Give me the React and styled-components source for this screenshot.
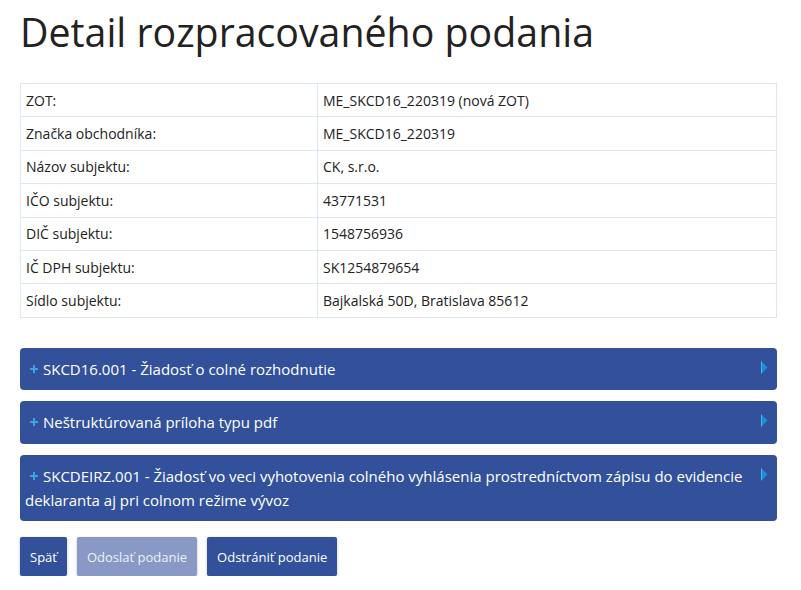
import React from 'react'
import styled, { createGlobalStyle } from 'styled-components'

const GlobalStyle = createGlobalStyle`
  body {
    margin: 0;
    background: #fff;
    font-family: "Open Sans", "Noto Sans", sans-serif;
    color: #222;
  }
`

const Page = styled.div`
  padding: 0 24px 0 20px;
`

const Title = styled.h1`
  margin: 0;
  padding-top: 6px;
  font-size: 39.3px;
  font-weight: 400;
  line-height: 52px;
  color: #222;
`

const Table = styled.table`
  width: 100%;
  margin-top: 25px;
  border-collapse: collapse;
  table-layout: fixed;
  font-size: 14px;
`

const Cell = styled.td`
  border: 1px solid #dde6f6;
  height: 32.4px;
  padding: 0 5px;
  width: ${p => (p.$label ? '286px' : 'auto')};
  vertical-align: middle;
`

const Panels = styled.div`
  margin-top: 30px;
  display: flex;
  flex-direction: column;
  gap: 11px;
`

const Panel = styled.div`
  display: flex;
  align-items: flex-start;
  gap: 8px;
  background: #32519a;
  border-radius: 4px;
  color: #fff;
  font-size: 15px;
  line-height: 24px;
  padding: 9px 9px 9.5px 5px;
`

const PanelTitle = styled.div`
  flex: 1;
`

const Plus = styled.span`
  display: inline-block;
  margin: 0 5px 0 5px;
  vertical-align: 2px;
  line-height: 0;
`

const Chevron = styled.span`
  display: flex;
  padding-top: 4px;
`

const Actions = styled.div`
  display: flex;
  gap: 10px;
  margin-top: 16px;
`

const Button = styled.button`
  height: 39px;
  padding: 0 10px;
  border: none;
  border-radius: 2px;
  background: ${p => (p.disabled ? '#8799c4' : '#32519a')};
  color: ${p => (p.disabled ? '#eef1f8' : '#fff')};
  font-family: "Open Sans", "Noto Sans", sans-serif;
  font-size: 13px;
  box-shadow: 0 1px 3px rgba(0, 0, 0, 0.25);
`

const rows = [
  ['ZOT:', 'ME_SKCD16_220319 (nová ZOT)'],
  ['Značka obchodníka:', 'ME_SKCD16_220319'],
  ['Názov subjektu:', 'CK, s.r.o.'],
  ['IČO subjektu:', '43771531'],
  ['DIČ subjektu:', '1548756936'],
  ['IČ DPH subjektu:', 'SK1254879654'],
  ['Sídlo subjektu:', 'Bajkalská 50D, Bratislava 85612'],
]

const panels = [
  'SKCD16.001 - Žiadosť o colné rozhodnutie',
  'Neštruktúrovaná príloha typu pdf',
  'SKCDEIRZ.001 - Žiadosť vo veci vyhotovenia colného vyhlásenia prostredníctvom zápisu do evidencie deklaranta aj pri colnom režime vývoz',
]

const PlusIcon = () => (
  <svg width="8" height="8" viewBox="0 0 8 8">
    <rect x="3" y="0" width="2" height="8" fill="#3ea2e2" />
    <rect x="0" y="3" width="8" height="2" fill="#3ea2e2" />
  </svg>
)

const ChevronIcon = () => (
  <svg width="7" height="13" viewBox="0 0 7 13">
    <path d="M0.5 0.5 L6.5 6.5 L0.5 12.5 Z" fill="#1c8ddb" />
    <path d="M0.5 0.5 L0.5 12.5" stroke="#45b5f0" strokeWidth="1" />
  </svg>
)

export default function App() {
  return (
    <Page>
      <GlobalStyle />
      <Title>Detail rozpracovaného podania</Title>
      <Table>
        <tbody>
          {rows.map(([k, v]) => (
            <tr key={k}>
              <Cell $label>{k}</Cell>
              <Cell>{v}</Cell>
            </tr>
          ))}
        </tbody>
      </Table>
      <Panels>
        {panels.map(t => (
          <Panel key={t}>
            <PanelTitle>
              <Plus><PlusIcon /></Plus>
              {t}
            </PanelTitle>
            <Chevron><ChevronIcon /></Chevron>
          </Panel>
        ))}
      </Panels>
      <Actions>
        <Button>Späť</Button>
        <Button disabled>Odoslať podanie</Button>
        <Button>Odstrániť podanie</Button>
      </Actions>
    </Page>
  )
}
